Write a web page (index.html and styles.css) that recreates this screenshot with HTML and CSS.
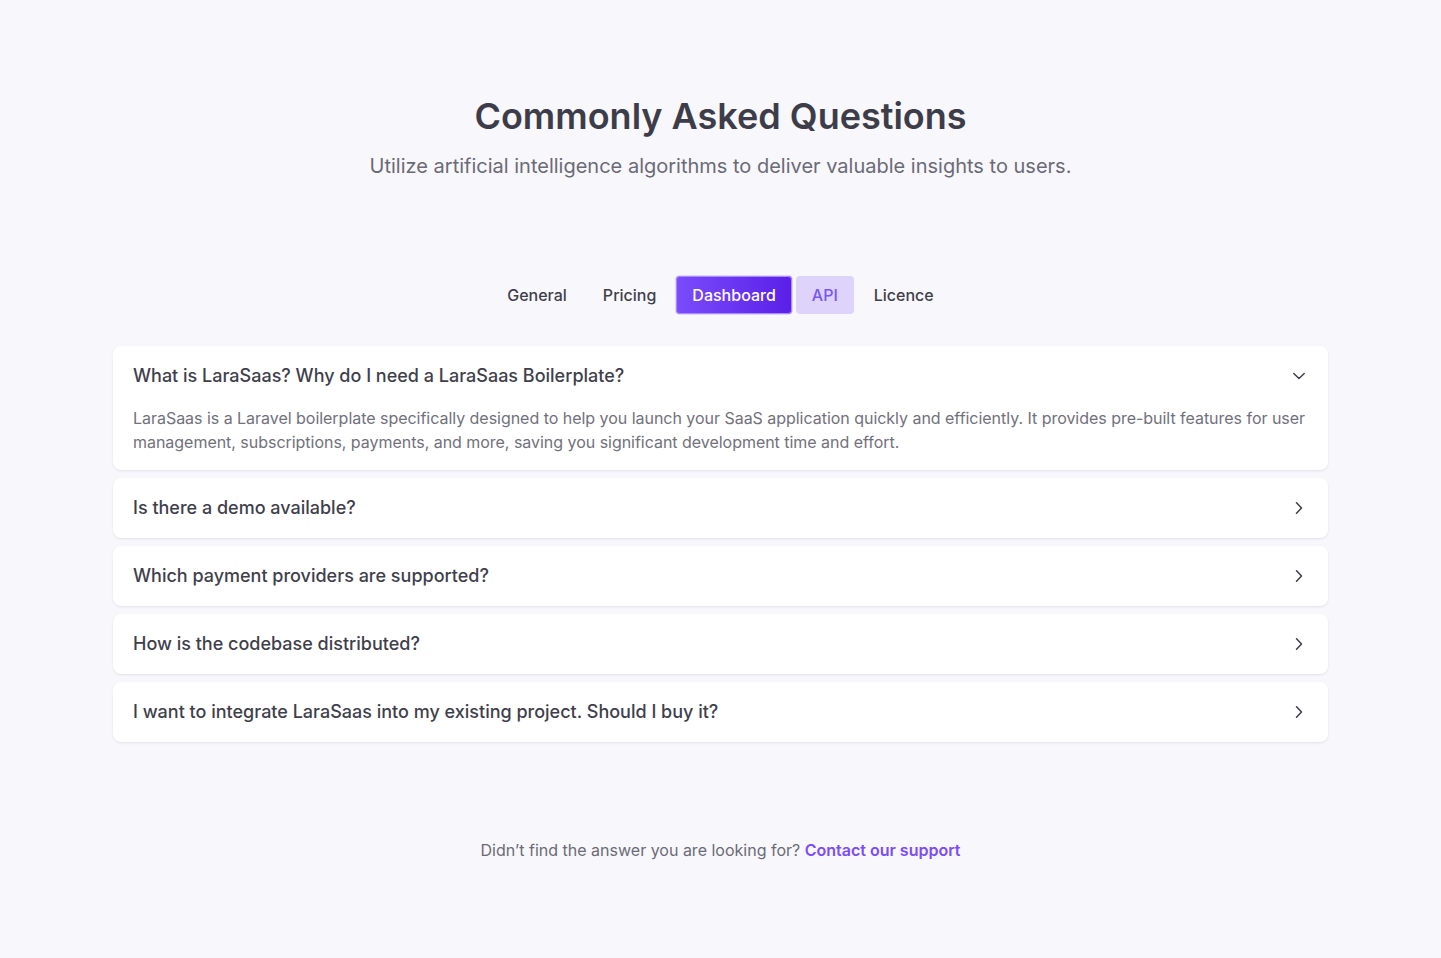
FILE: index.html
```html
<!DOCTYPE html>
<html lang="en">
<head>
<meta charset="utf-8">
<title>FAQ</title>
<link rel="stylesheet" href="styles.css">
</head>
<body>
<main class="page">
  <header class="hero">
    <h1 class="title">Commonly Asked Questions</h1>
    <p class="subtitle">Utilize artificial intelligence algorithms to deliver valuable insights to users.</p>
  </header>

  <nav class="tabs">
    <span class="tab">General</span>
    <span class="tab">Pricing</span>
    <span class="tab tab-active">Dashboard</span>
    <span class="tab tab-soft">API</span>
    <span class="tab">Licence</span>
  </nav>

  <section class="faq">
    <article class="card open">
      <div class="q-row">
        <h3 class="question">What is LaraSaas? Why do I need a LaraSaas Boilerplate?</h3>
        <svg class="chev" width="16" height="16" viewBox="0 0 16 16" fill="none"><path d="M2.8 5.5 L8 10.5 L13.2 5.5" stroke="#3f3f4c" stroke-width="1.5" stroke-linecap="round" stroke-linejoin="round"/></svg>
      </div>
      <p class="answer">LaraSaas is a Laravel boilerplate specifically designed to help you launch your SaaS application quickly and efficiently. It provides pre-built features for user management, subscriptions, payments, and more, saving you significant development time and effort.</p>
    </article>
    <article class="card">
      <div class="q-row">
        <h3 class="question">Is there a demo available?</h3>
        <svg class="chev" width="16" height="16" viewBox="0 0 16 16" fill="none"><path d="M5.5 2.8 L10.5 8 L5.5 13.2" stroke="#3f3f4c" stroke-width="1.5" stroke-linecap="round" stroke-linejoin="round"/></svg>
      </div>
    </article>
    <article class="card">
      <div class="q-row">
        <h3 class="question">Which payment providers are supported?</h3>
        <svg class="chev" width="16" height="16" viewBox="0 0 16 16" fill="none"><path d="M5.5 2.8 L10.5 8 L5.5 13.2" stroke="#3f3f4c" stroke-width="1.5" stroke-linecap="round" stroke-linejoin="round"/></svg>
      </div>
    </article>
    <article class="card">
      <div class="q-row">
        <h3 class="question">How is the codebase distributed?</h3>
        <svg class="chev" width="16" height="16" viewBox="0 0 16 16" fill="none"><path d="M5.5 2.8 L10.5 8 L5.5 13.2" stroke="#3f3f4c" stroke-width="1.5" stroke-linecap="round" stroke-linejoin="round"/></svg>
      </div>
    </article>
    <article class="card">
      <div class="q-row">
        <h3 class="question">I want to integrate LaraSaas into my existing project. Should I buy it?</h3>
        <svg class="chev" width="16" height="16" viewBox="0 0 16 16" fill="none"><path d="M5.5 2.8 L10.5 8 L5.5 13.2" stroke="#3f3f4c" stroke-width="1.5" stroke-linecap="round" stroke-linejoin="round"/></svg>
      </div>
    </article>
  </section>

  <p class="footer-note">Didn’t find the answer you are looking for? <a class="support" href="#">Contact our support</a></p>
</main>
</body>
</html>
```

FILE: styles.css
```css
* { box-sizing: border-box; }

html, body {
  margin: 0;
  padding: 0;
  background: #f8f7fc;
}

body {
  font-family: Inter, "Noto Sans", "Liberation Sans", sans-serif;
  color: #3f3f46;
}

.page {
  width: 1215px;
  margin: 0 auto;
  padding-top: 96px;
  display: flex;
  flex-direction: column;
  align-items: stretch;
}

.hero {
  display: flex;
  flex-direction: column;
  align-items: center;
  gap: 16px;
}

.title {
  margin: 0;
  font-size: 36px;
  line-height: 40px;
  font-weight: 600;
  color: #3d3d4a;
}

.subtitle {
  margin: 0;
  font-size: 20px;
  line-height: 28px;
  color: #6b6b76;
}

.tabs {
  margin-top: 96px;
  display: flex;
  justify-content: center;
  gap: 4px;
}

.tab {
  padding: 8px 16px;
  font-size: 16px;
  line-height: 22px;
  font-weight: 500;
  color: #3f3f4a;
  border-radius: 4px;
}

.tab-active {
  color: #ffffff;
  background: linear-gradient(90deg, #7a4cfb 0%, #5a1fe8 100%);
  box-shadow: inset 0 0 0 1px #a88bff, 0 0 0 1px rgba(124, 77, 255, 0.2);
}

.tab-soft {
  color: #7c55f6;
  background: #ddd3fb;
}

.faq {
  margin-top: 32px;
  display: flex;
  flex-direction: column;
  gap: 8px;
}

.card {
  background: #ffffff;
  border-radius: 8px;
  padding: 18px 20px;
  box-shadow: 0 1px 3px rgba(60, 50, 110, 0.07), 0 1px 2px rgba(60, 50, 110, 0.04);
}

.card.open {
  padding-bottom: 16px;
}

.q-row {
  display: flex;
  align-items: center;
  justify-content: space-between;
}

.question {
  margin: 0;
  font-size: 18px;
  line-height: 24px;
  font-weight: 500;
  color: #3f3f4c;
}

.chev {
  flex: none;
  margin-right: 1px;
}

.answer {
  margin: 18px 0 0;
  font-size: 16px;
  line-height: 24px;
  letter-spacing: -0.03px;
  color: #71717c;
}

.footer-note {
  margin: 96px 0 0;
  text-align: center;
  font-size: 16px;
  line-height: 24px;
  color: #6b6b76;
}

.support {
  color: #7a4cfb;
  font-weight: 600;
  text-decoration: none;
}
```
